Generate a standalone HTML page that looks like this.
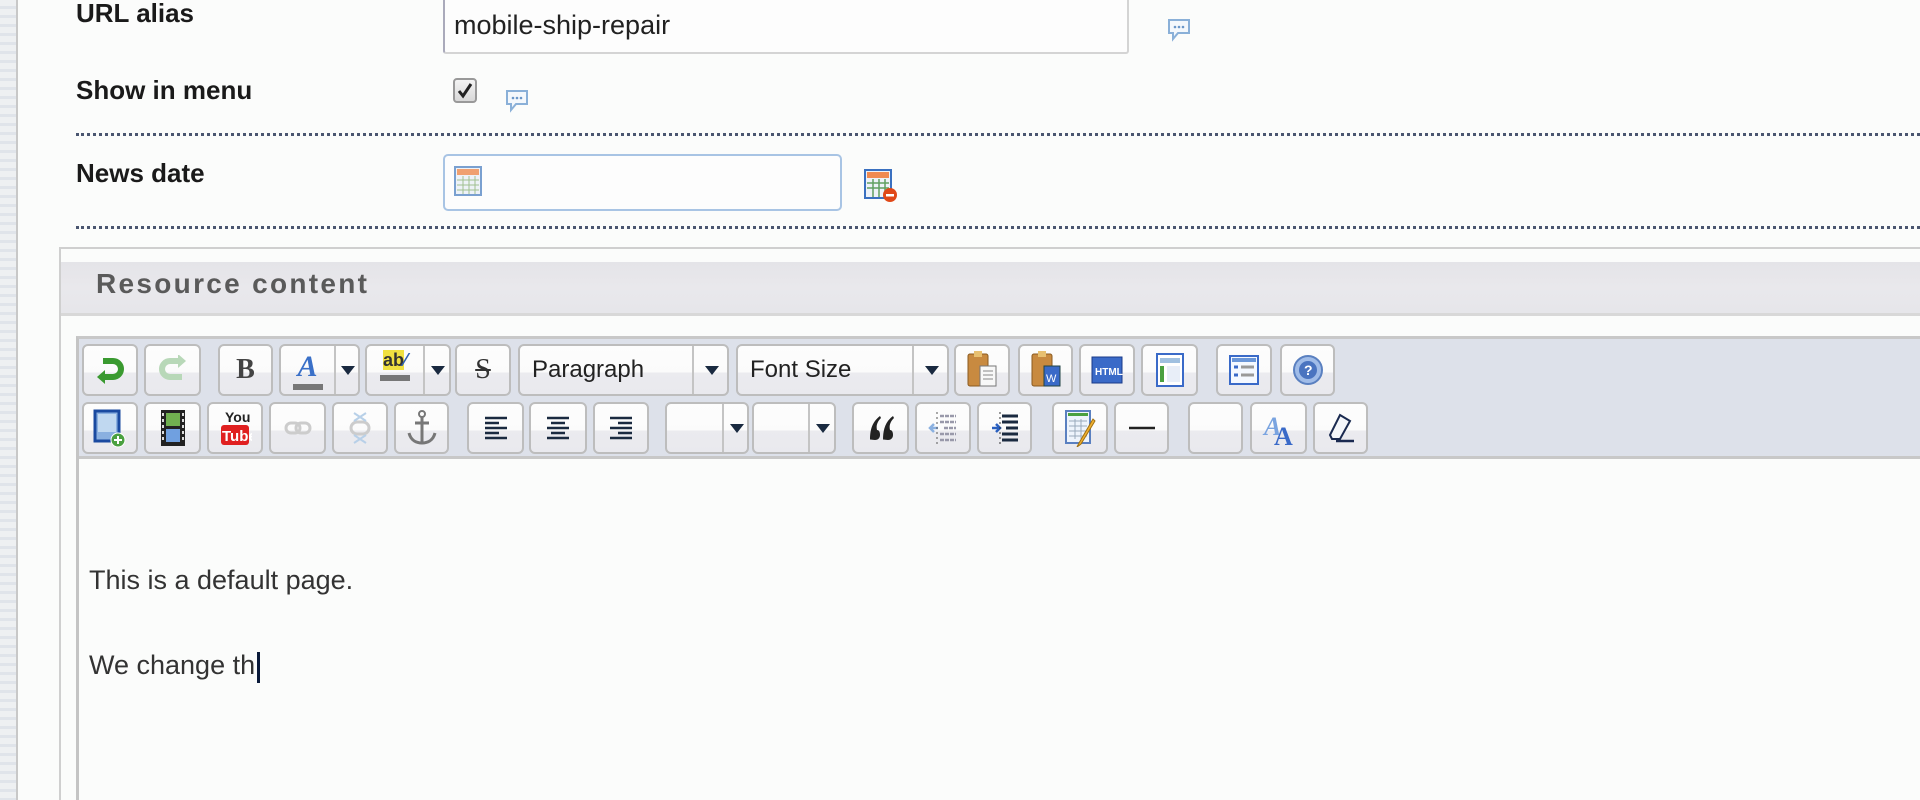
<!DOCTYPE html>
<html style="width:1920px;height:800px;overflow:hidden"><head><meta charset="utf-8"><style>
*{margin:0;padding:0;box-sizing:border-box}
body{width:1920px;height:800px;overflow:hidden;background:#fbfcfb;font-family:"Liberation Sans",Arial,sans-serif;position:relative}
.a{position:absolute}
.lbl{position:absolute;left:76px;font-weight:bold;font-size:26px;color:#1a1a1a;line-height:1}
.dot{position:absolute;left:76px;right:0;height:0;border-top:3px dotted #4a5670}
.b{position:absolute;height:52px;border:2px solid #bdbdbd;border-radius:6px;background:linear-gradient(#fdfdfd 0,#fbfbfb 55%,#ebebef 55%,#e9e9ee 100%);display:flex;align-items:center;justify-content:center}
.r2{top:402px}
.r1{top:344px}
.arr{position:absolute;top:0;bottom:0;border-left:2px solid #c4c4c4;display:flex;align-items:center;justify-content:center}
.arr:after{content:"";border-left:7px solid transparent;border-right:7px solid transparent;border-top:9px solid #1a2a40}
.sel{justify-content:flex-start;padding-left:12px;font-size:24px;color:#222}
</style></head><body>
<div class="a" style="left:0;top:0;width:16px;height:800px;background:repeating-linear-gradient(#eef0f2 0 6px,#e0e4ea 6px 9px)"></div>
<div class="a" style="left:16px;top:0;width:2px;height:800px;background:#c8c8c8"></div>

<div class="lbl" style="top:0px">URL alias</div>
<div class="a" style="left:443px;top:-10px;width:686px;height:64px;border:2px solid #d4d4d4;border-left-color:#aab;border-radius:3px;background:#fdfdfd"></div>
<div class="a" style="left:454px;top:10px;font-size:27px;color:#222">mobile-ship-repair</div>
<svg class="a" style="left:1166px;top:17px" width="26" height="26" viewBox="0 0 26 26"><path d="M3 3h20v13H12l-5 6v-6H3z" fill="#f4f8fc" stroke="#8ab0d8" stroke-width="2"/><circle cx="9" cy="10" r="1.3" fill="#6a96c8"/><circle cx="13" cy="10" r="1.3" fill="#6a96c8"/><circle cx="17" cy="10" r="1.3" fill="#6a96c8"/></svg>

<div class="lbl" style="top:77px">Show in menu</div>
<div class="a" style="left:453px;top:78px;width:24px;height:25px;border:2px solid #999;border-radius:4px;background:linear-gradient(#f4f4f4,#d8d8d8)"></div>
<svg class="a" style="left:453px;top:78px" width="24" height="25"><path d="M6 13l4 5 8-12" fill="none" stroke="#222" stroke-width="3"/></svg>
<svg class="a" style="left:504px;top:88px" width="26" height="26" viewBox="0 0 26 26"><path d="M3 3h20v13H12l-5 6v-6H3z" fill="#f4f8fc" stroke="#8ab0d8" stroke-width="2"/><circle cx="9" cy="10" r="1.3" fill="#6a96c8"/><circle cx="13" cy="10" r="1.3" fill="#6a96c8"/><circle cx="17" cy="10" r="1.3" fill="#6a96c8"/></svg>
<div class="dot" style="top:133px"></div>

<div class="lbl" style="top:160px">News date</div>
<div class="a" style="left:443px;top:154px;width:399px;height:57px;border:2px solid #a8c4e4;border-radius:5px;background:#fdfdfd"></div>
<svg class="a" style="left:454px;top:166px" width="30" height="30"><rect x="1" y="1" width="26" height="28" fill="#eef2f8" stroke="#7aa0d0" stroke-width="2"/><rect x="3" y="3" width="22" height="6" fill="#f0a070"/><path d="M3 14h22M3 19h22M3 24h22M9 10v18M15 10v18M21 10v18" stroke="#a0c090" stroke-width="1"/></svg>
<svg class="a" style="left:864px;top:169px" width="34" height="34"><rect x="1" y="1" width="26" height="28" fill="#eef2f8" stroke="#3a70c0" stroke-width="2"/><rect x="3" y="3" width="22" height="6" fill="#f08a50"/><path d="M3 14h22M3 19h22M9 10v18M15 10v18M21 10v18" stroke="#60a060" stroke-width="1.5"/><circle cx="26" cy="26" r="7" fill="#e04818"/><rect x="22" y="25" width="8" height="2.5" fill="#fff"/></svg>
<div class="dot" style="top:226px"></div>

<!-- panel -->
<div class="a" style="left:59px;top:247px;width:1861px;height:553px;border:2px solid #cfcfcf;border-bottom:none;border-right:none;background:#fbfcfb"></div>
<div class="a" style="left:61px;top:262px;width:1859px;height:54px;background:linear-gradient(#e4e4e8,#e9e8ec 50%,#e6e6ea);border-bottom:3px solid #d8d8d8"></div>
<div class="a" style="left:96px;top:268px;font-size:28px;font-weight:bold;color:#5a5a5a;letter-spacing:2.3px">Resource content</div>

<div class="a" style="left:76px;top:336px;width:1844px;height:464px;border-left:3px solid #c4c4c4;border-top:3px solid #c8c8c8"></div>
<div class="a" style="left:79px;top:339px;width:1841px;height:120px;background:#dde1ea;border-bottom:3px solid #c8c8c8"></div>

<!-- row1 -->
<div class="b r1" style="left:82px;width:56px"><svg width="30" height="30"><path d="M8 6h10a8 8 0 0 1 0 16H6" fill="none" stroke="#3a9a30" stroke-width="6"/><path d="M2 22l8-7v14z" fill="#3a9a30"/></svg></div>
<div class="b r1" style="left:144px;width:57px"><svg width="30" height="30"><path d="M22 6H12a8 8 0 0 0 0 16h12" fill="none" stroke="#b8d8b8" stroke-width="6"/><path d="M28 6l-8-7v14z" fill="#b8d8b8"/></svg></div>
<div class="b r1" style="left:218px;width:55px;font:bold 28px 'Liberation Serif',serif;color:#444">B</div>
<div class="b r1" style="left:279px;width:81px"><div style="position:absolute;left:0;width:53px;text-align:center;font:italic bold 30px 'Liberation Serif',serif;color:#3a70c8;top:4px">A<div style="margin:0 auto;width:30px;height:6px;background:#777"></div></div><div class="arr" style="left:53px;width:26px"></div></div>
<div class="b r1" style="left:365px;width:86px"><div style="position:absolute;left:0;width:56px;text-align:center;top:4px;font:bold 18px 'Liberation Sans';color:#333"><span style="background:#f0e040">ab</span><span style="color:#3060b0">⁄</span><div style="margin:4px auto 0;width:30px;height:6px;background:#777"></div></div><div class="arr" style="left:56px;width:28px"></div></div>
<div class="b r1" style="left:455px;width:56px;font:28px 'Liberation Serif',serif;color:#333;text-decoration:line-through">S</div>
<div class="b r1 sel" style="left:518px;width:211px">Paragraph<div class="arr" style="left:172px;width:37px"></div></div>
<div class="b r1 sel" style="left:736px;width:213px">Font Size<div class="arr" style="left:174px;width:37px"></div></div>
<div class="b r1" style="left:954px;width:56px"><svg width="34" height="40"><rect x="3" y="4" width="20" height="32" rx="2" fill="#c88a40" stroke="#8a5a20"/><rect x="9" y="1" width="8" height="6" fill="#e8c070"/><rect x="15" y="16" width="16" height="20" fill="#f8f8f8" stroke="#777"/><path d="M18 21h10M18 25h10M18 29h10" stroke="#888"/></svg></div>
<div class="b r1" style="left:1018px;width:55px"><svg width="34" height="40"><rect x="3" y="4" width="20" height="32" rx="2" fill="#c88a40" stroke="#8a5a20"/><rect x="9" y="1" width="8" height="6" fill="#e8c070"/><rect x="15" y="16" width="16" height="20" fill="#3a6ac8" stroke="#244"/><text x="17" y="32" font-size="11" fill="#fff" font-family="Liberation Sans">W</text></svg></div>
<div class="b r1" style="left:1079px;width:56px"><svg width="34" height="34"><rect x="2" y="4" width="30" height="26" fill="#3a6ac8" stroke="#1a3a88"/><text x="5" y="22" font-size="10" font-weight="bold" fill="#fff" font-family="Liberation Sans">HTML</text></svg></div>
<div class="b r1" style="left:1141px;width:57px"><svg width="34" height="36"><rect x="4" y="2" width="26" height="32" fill="#fff" stroke="#3a6ac8" stroke-width="2"/><rect x="7" y="6" width="20" height="5" fill="#a0c0e0"/><rect x="7" y="14" width="4" height="16" fill="#4aa040"/><rect x="14" y="14" width="13" height="16" fill="#e8eef8"/></svg></div>
<div class="b r1" style="left:1216px;width:56px"><svg width="34" height="34"><rect x="3" y="3" width="28" height="28" fill="#f4f8ff" stroke="#3a6ac8" stroke-width="2"/><rect x="5" y="5" width="24" height="4" fill="#6a96d8"/><path d="M7 14h4M7 22h4" stroke="#3a6ac8" stroke-width="3"/><path d="M14 14h13M14 22h13" stroke="#999" stroke-width="3"/></svg></div>
<div class="b r1" style="left:1280px;width:55px"><svg width="34" height="34"><circle cx="17" cy="17" r="14" fill="#a0bce8" stroke="#5a80c0" stroke-width="2"/><circle cx="17" cy="17" r="9" fill="#4a74c0"/><text x="13" y="22" font-size="14" font-weight="bold" fill="#fff" font-family="Liberation Sans">?</text></svg></div>

<!-- row2 -->
<div class="b r2" style="left:82px;width:56px"><svg width="34" height="40"><rect x="2" y="3" width="24" height="30" fill="#8ab0e0" stroke="#1a4aa0" stroke-width="3"/><rect x="5" y="6" width="18" height="18" fill="#c0d8f0"/><circle cx="25" cy="32" r="7" fill="#4aa040" stroke="#fff"/><path d="M21 32h8M25 28v8" stroke="#fff" stroke-width="2"/></svg></div>
<div class="b r2" style="left:144px;width:57px"><svg width="30" height="40"><rect x="3" y="2" width="24" height="36" fill="#222"/><rect x="8" y="5" width="14" height="13" fill="#70b050"/><rect x="8" y="21" width="14" height="13" fill="#70a0e0"/><path d="M5 5v30M25 5v30" stroke="#ddd" stroke-width="2" stroke-dasharray="3 3"/></svg></div>
<div class="b r2" style="left:207px;width:56px"><svg width="34" height="42"><text x="7" y="15" font-size="14" font-weight="bold" fill="#222" font-family="Liberation Sans">You</text><rect x="3" y="18" width="28" height="20" rx="3" fill="#e02020"/><text x="4" y="34" font-size="15" font-weight="bold" fill="#fff" font-family="Liberation Sans">Tube</text></svg></div>
<div class="b r2" style="left:269px;width:57px"><svg width="30" height="20"><rect x="3" y="5" width="14" height="10" rx="5" fill="none" stroke="#ccc" stroke-width="3"/><rect x="13" y="5" width="14" height="10" rx="5" fill="none" stroke="#ccc" stroke-width="3"/></svg></div>
<div class="b r2" style="left:332px;width:56px"><svg width="30" height="36"><rect x="6" y="12" width="18" height="12" rx="6" fill="none" stroke="#ccc" stroke-width="3"/><path d="M9 3l12 8M21 3L9 11M9 33l12-8M21 33L9 25" stroke="#b8d0e8" stroke-width="2"/></svg></div>
<div class="b r2" style="left:394px;width:55px"><svg width="34" height="38"><circle cx="17" cy="5" r="3" fill="none" stroke="#777" stroke-width="2"/><path d="M17 8v26M10 14h14M4 24c2 8 8 10 13 10s11-2 13-10" fill="none" stroke="#777" stroke-width="3"/></svg></div>
<div class="b r2" style="left:467px;width:57px"><svg width="30" height="30"><path d="M4 5h22M4 10h14M4 15h22M4 20h14M4 25h22" stroke="#1a2a40" stroke-width="2.5"/></svg></div>
<div class="b r2" style="left:529px;width:58px"><svg width="30" height="30"><path d="M4 5h22M8 10h14M4 15h22M8 20h14M4 25h22" stroke="#1a2a40" stroke-width="2.5"/></svg></div>
<div class="b r2" style="left:593px;width:56px"><svg width="30" height="30"><path d="M4 5h22M12 10h14M4 15h22M12 20h14M4 25h22" stroke="#1a2a40" stroke-width="2.5"/></svg></div>
<div class="b r2" style="left:665px;width:84px"><div class="arr" style="left:55px;width:27px"></div></div>
<div class="b r2" style="left:752px;width:84px"><div class="arr" style="left:54px;width:28px"></div></div>
<div class="b r2" style="left:852px;width:57px"><svg width="30" height="32"><path d="M4 28c0-10 2-18 10-24l1 2c-4 4-5 8-4 12 2 0 3 2 3 5 0 3-2 5-5 5s-5-1-5-0z M17 28c0-10 2-18 10-24l1 2c-4 4-5 8-4 12 2 0 3 2 3 5 0 3-2 5-5 5s-5-1-5 0z" fill="#222"/></svg></div>
<div class="b r2" style="left:915px;width:56px"><svg width="30" height="36"><path d="M12 6h16M12 12h16M16 18h12M12 24h16M12 30h16" stroke="#99a" stroke-width="2.5" stroke-dasharray="4 1"/><path d="M10 18H2m4-4l-4 4 4 4" stroke="#8ab0e0" stroke-width="2.5" fill="none"/><path d="M9 2v34" stroke="#555" stroke-dasharray="2 3"/></svg></div>
<div class="b r2" style="left:977px;width:55px"><svg width="30" height="36"><path d="M12 6h16M12 12h16M16 18h12M12 24h16M12 30h16" stroke="#1a2a40" stroke-width="3"/><path d="M2 18h8m-4-4l4 4-4 4" stroke="#2a60c0" stroke-width="2.5" fill="none"/><path d="M10 2v34" stroke="#333" stroke-dasharray="2 3"/></svg></div>
<div class="b r2" style="left:1052px;width:56px"><svg width="34" height="38"><rect x="3" y="2" width="24" height="32" fill="#eef4fc" stroke="#5a80c0" stroke-width="2"/><rect x="5" y="4" width="20" height="3" fill="#4aa040"/><path d="M6 12h18M6 17h18M6 22h18M6 27h18M12 10v20M18 10v20" stroke="#9ab"/><path d="M30 10L16 34l-2 4 4-3L32 12z" fill="#f0b030" stroke="#a07010"/></svg></div>
<div class="b r2" style="left:1114px;width:55px"><svg width="30" height="6"><path d="M2 3h26" stroke="#222" stroke-width="2.5"/></svg></div>
<div class="b r2" style="left:1188px;width:55px"></div>
<div class="b r2" style="left:1250px;width:57px"><svg width="34" height="38"><text x="2" y="26" font-size="26" font-weight="bold" font-style="italic" fill="#7aa4e0" font-family="Liberation Serif">A</text><text x="12" y="36" font-size="26" font-weight="bold" fill="#3a6ac8" font-family="Liberation Serif">A</text></svg></div>
<div class="b r2" style="left:1313px;width:55px"><svg width="34" height="34"><path d="M16 4l10 6-10 18H8l-2-4z" fill="#f4f6fa" stroke="#1a2a50" stroke-width="2"/><path d="M12 30h18" stroke="#1a2a50" stroke-width="2.5"/></svg></div>

<div class="a" style="left:89px;top:565px;font-size:27px;color:#333">This is a default page.</div>
<div class="a" style="left:89px;top:650px;font-size:27px;color:#333">We change th</div>
<div class="a" style="left:257px;top:652px;width:3px;height:31px;background:#0a1a3a"></div>
</body></html>
